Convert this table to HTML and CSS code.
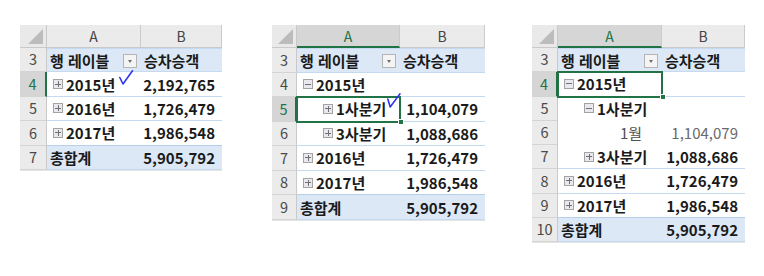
FILE: index.html
```html
<!DOCTYPE html>
<html lang="ko">
<head>
<meta charset="utf-8">
<link rel="stylesheet" href="styles.css">
</head>
<body>
<div class="sheets">
  <!-- Panel 1 -->
  <div class="sheet s1">
    <div class="corner"><span class="tri"></span></div>
    <div class="colhead">A</div>
    <div class="colhead">B</div>

    <div class="rowhead">3</div>
    <div class="cell hdr lbl">행 레이블<span class="filter"></span></div>
    <div class="cell hdr">승차승객</div>

    <div class="rowhead sel">4</div>
    <div class="cell lbl b l0"><span class="tg plus"></span>2015년<svg class="check c1" viewBox="0 0 14 15"><path d="M0.8 7.5 L4 14 L13.5 0.8"/></svg></div>
    <div class="cell val b">2,192,765</div>

    <div class="rowhead">5</div>
    <div class="cell lbl b l0"><span class="tg plus"></span>2016년</div>
    <div class="cell val b">1,726,479</div>

    <div class="rowhead">6</div>
    <div class="cell lbl b l0 last"><span class="tg plus"></span>2017년</div>
    <div class="cell val b last">1,986,548</div>

    <div class="rowhead">7</div>
    <div class="cell tot lbl">총합계</div>
    <div class="cell tot val">5,905,792</div>
  </div>

  <!-- Panel 2 -->
  <div class="sheet s2">
    <div class="corner"><span class="tri"></span></div>
    <div class="colhead selc">A</div>
    <div class="colhead">B</div>

    <div class="rowhead">3</div>
    <div class="cell hdr lbl">행 레이블<span class="filter"></span></div>
    <div class="cell hdr">승차승객</div>

    <div class="rowhead">4</div>
    <div class="cell lbl b l0"><span class="tg minus"></span>2015년</div>
    <div class="cell val b"></div>

    <div class="rowhead sel">5</div>
    <div class="cell lbl b l1 active"><span class="tg plus"></span>1사분기<svg class="check c2" viewBox="0 0 14 15"><path d="M0.8 6 L3.2 14 L13 0.8"/></svg><span class="handle"></span></div>
    <div class="cell val b">1,104,079</div>

    <div class="rowhead">6</div>
    <div class="cell lbl b l1"><span class="tg plus"></span>3사분기</div>
    <div class="cell val b">1,088,686</div>

    <div class="rowhead">7</div>
    <div class="cell lbl b l0"><span class="tg plus"></span>2016년</div>
    <div class="cell val b">1,726,479</div>

    <div class="rowhead">8</div>
    <div class="cell lbl b l0 last"><span class="tg plus"></span>2017년</div>
    <div class="cell val b last">1,986,548</div>

    <div class="rowhead">9</div>
    <div class="cell tot lbl">총합계</div>
    <div class="cell tot val">5,905,792</div>
  </div>

  <!-- Panel 3 -->
  <div class="sheet s3">
    <div class="corner"><span class="tri"></span></div>
    <div class="colhead selc">A</div>
    <div class="colhead">B</div>

    <div class="rowhead">3</div>
    <div class="cell hdr lbl">행 레이블<span class="filter"></span></div>
    <div class="cell hdr">승차승객</div>

    <div class="rowhead sel">4</div>
    <div class="cell lbl b l0 active"><span class="tg minus"></span>2015년<span class="handle"></span></div>
    <div class="cell val b"></div>

    <div class="rowhead">5</div>
    <div class="cell lbl b l1 nob"><span class="tg minus"></span>1사분기</div>
    <div class="cell val b nob"></div>

    <div class="rowhead">6</div>
    <div class="cell lbl leaf nob">1월</div>
    <div class="cell val leafv nob">1,104,079</div>

    <div class="rowhead">7</div>
    <div class="cell lbl b l1"><span class="tg plus"></span>3사분기</div>
    <div class="cell val b">1,088,686</div>

    <div class="rowhead">8</div>
    <div class="cell lbl b l0"><span class="tg plus"></span>2016년</div>
    <div class="cell val b">1,726,479</div>

    <div class="rowhead">9</div>
    <div class="cell lbl b l0 last"><span class="tg plus"></span>2017년</div>
    <div class="cell val b last">1,986,548</div>

    <div class="rowhead">10</div>
    <div class="cell tot lbl">총합계</div>
    <div class="cell tot val">5,905,792</div>
  </div>
</div>
</body>
</html>
```

FILE: styles.css
```css
* { box-sizing: border-box; }

html, body {
  margin: 0;
  padding: 0;
  background: #ffffff;
}

body {
  font-family: "Noto Sans CJK KR", "Noto Sans", sans-serif;
  color: #1a1a1a;
}

.sheets {
  display: flex;
  align-items: flex-start;
  padding: 25px 0 0 20px;
}

.sheet {
  display: grid;
  grid-template-rows: 23px;
  grid-auto-rows: 24.4px;
  border-bottom: 1px solid #e4e4e4;
}

.s1 { grid-template-columns: 27px 94px 81px; }
.s2 { grid-template-columns: 25px 103px 85px; margin-left: 50px; grid-auto-rows: 24.55px; }
.s3 { grid-template-columns: 26px 104px 83px; margin-left: 47px; grid-auto-rows: 24.25px; }

.corner {
  position: relative;
  background: #e9e9e9;
  border-right: 1px solid #c9c9c9;
  border-bottom: 1px solid #c9c9c9;
}

.corner .tri {
  position: absolute;
  right: 3px;
  bottom: 3px;
  width: 0;
  height: 0;
  border-left: 15px solid transparent;
  border-bottom: 15px solid #bcbcbc;
}

.colhead {
  background: #ebebeb;
  border-right: 1px solid #cbcbcb;
  border-bottom: 1px solid #c9c9c9;
  display: flex;
  align-items: center;
  justify-content: center;
  font-family: "Noto Sans CJK KR", sans-serif;
  font-size: 14px;
  color: #444;
  line-height: 1;
}

.colhead.selc {
  background: #d6d6d6;
  color: #217346;
  border-bottom: 2px solid #217346;
}

.rowhead {
  background: #ebebeb;
  border-right: 1px solid #c9c9c9;
  border-bottom: 1px solid #d4d4d4;
  display: flex;
  align-items: center;
  justify-content: center;
  font-family: "Noto Sans CJK KR", sans-serif;
  font-size: 14.5px;
  color: #4a4a4a;
  line-height: 1;
}

.rowhead.sel {
  background: #d5d5d5;
  color: #217346;
  border-right: 2px solid #217346;
}

.cell {
  position: relative;
  display: flex;
  align-items: center;
  font-size: 15px;
  font-weight: 700;
  line-height: 1;
  white-space: nowrap;
  background: #ffffff;
  border-bottom: 1px solid #c5d9f1;
}

.cell.hdr {
  background: #dce8f6;
  padding-left: 3px;
  border-top: 1px solid #c5d9f1;
}

.cell.hdr.lbl { padding-left: 3px; }

.cell.tot {
  background: #dce8f6;
}

.cell.tot.lbl { padding-left: 3px; }

.cell.val {
  justify-content: flex-end;
  padding-right: 7px;
}

.cell.nob { border-bottom-color: transparent; }
.cell.last { border-bottom-color: #b8cfea; }

.cell.l0 { padding-left: 6px; }
.cell.l1 { padding-left: 26px; }

.cell.leaf {
  padding-left: 62px;
  font-weight: 400;
  color: #505050;
}

.cell.leafv {
  font-weight: 400;
  color: #6a6a6a;
}

.filter {
  position: absolute;
  right: 4px;
  top: 5px;
  width: 14px;
  height: 14px;
  background: #f4f4f4;
  border: 1px solid #b4b4b4;
}

.filter::after {
  content: "";
  position: absolute;
  left: 4px;
  top: 5px;
  border-left: 2.5px solid transparent;
  border-right: 2.5px solid transparent;
  border-top: 3px solid #707070;
}

.tg {
  position: relative;
  display: inline-block;
  flex: none;
  width: 10px;
  height: 10px;
  margin-right: 3px;
  border: 1px solid #a3a3a3;
  background: #e8e8ee;
}

.tg::before {
  content: "";
  position: absolute;
  left: 1px;
  top: 3.5px;
  width: 6px;
  height: 1px;
  background: #707070;
}

.tg.plus::after {
  content: "";
  position: absolute;
  left: 3.5px;
  top: 1px;
  width: 1px;
  height: 6px;
  background: #707070;
}

.check {
  position: absolute;
  width: 14px;
  height: 15px;
  overflow: visible;
}

.check path {
  fill: none;
  stroke: #2f36f0;
  stroke-width: 1.6;
  stroke-linecap: round;
  stroke-linejoin: round;
}

.check.c1 { left: 72px; top: -2px; }
.check.c2 { left: 90px; top: -4px; }

.cell.active {
  outline: 2px solid #217346;
  outline-offset: -1px;
  z-index: 2;
}

.handle {
  position: absolute;
  right: -4px;
  bottom: -4px;
  width: 6px;
  height: 6px;
  background: #217346;
  border: 1px solid #ffffff;
}
```
